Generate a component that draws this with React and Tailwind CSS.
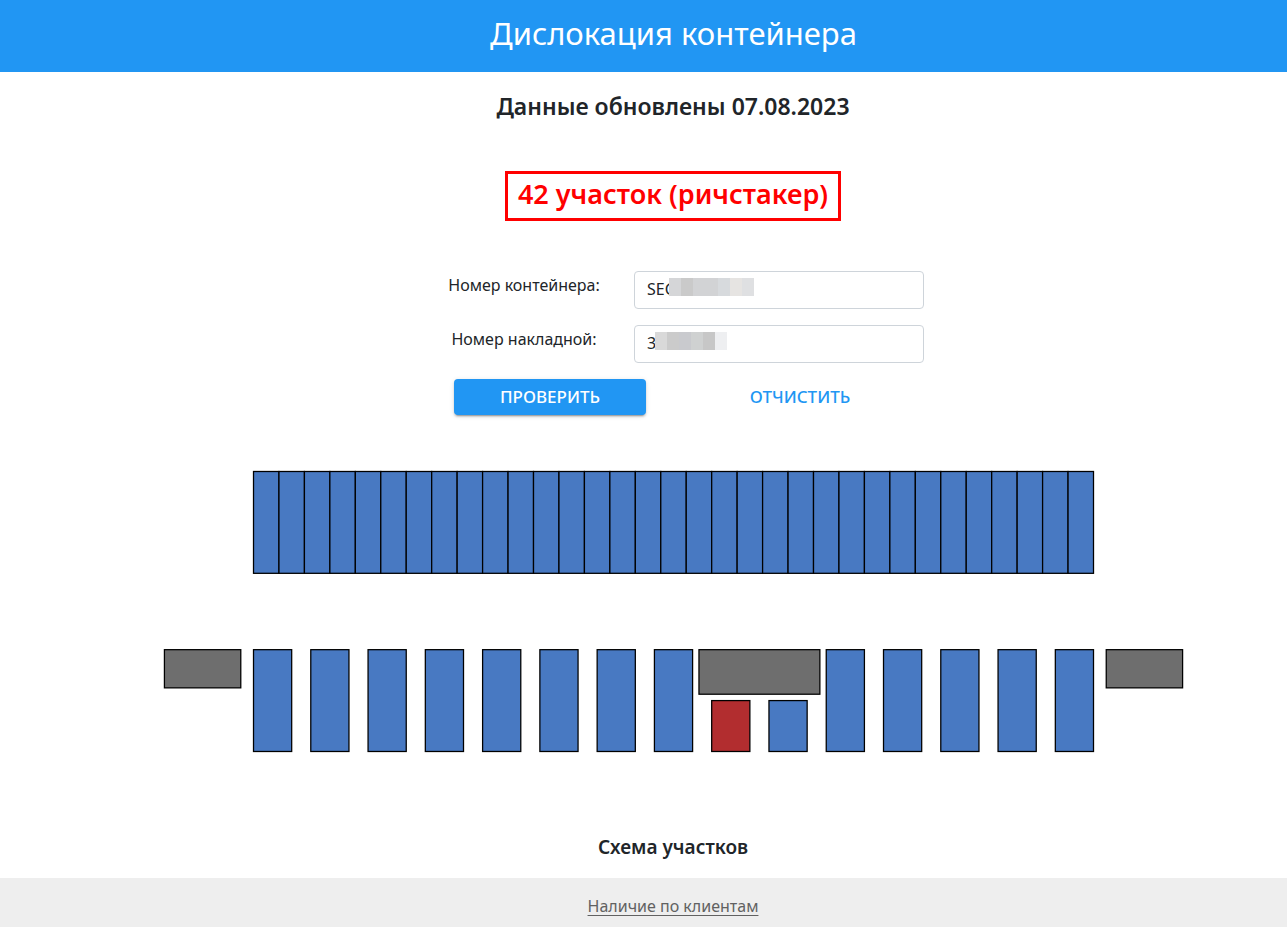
import { useState } from "react";

const BLUE = "#4879c2";
const GRAY = "#6e6e6e";
const RED = "#b22d2f";

const topRow = Array.from({ length: 33 }, (_, i) => ({ x: i * 20, y: 0, w: 20, h: 80, fill: BLUE }));

const bottomRow = Array.from({ length: 15 }, (_, i) => {
  const short = i === 8 || i === 9;
  return { x: i * 45, y: short ? 180 : 140, w: 30, h: short ? 40 : 80, fill: i === 8 ? RED : BLUE };
});

const buildings = [
  { x: -70, y: 140, w: 60, h: 30, fill: GRAY },
  { x: 350, y: 140, w: 95, h: 35, fill: GRAY },
  { x: 670, y: 140, w: 60, h: 30, fill: GRAY },
];

function YardMap() {
  return (
    <svg viewBox="-110.4 -21.6 880 275" className="block w-full max-w-[1120px]" role="img" aria-label="Схема участков">
      {[...topRow, ...bottomRow, ...buildings].map((r) => (
        <rect key={`${r.x}:${r.y}:${r.w}`} x={r.x} y={r.y} width={r.w} height={r.h} fill={r.fill} stroke="#000" strokeWidth="1" />
      ))}
    </svg>
  );
}

function Mask({ className, children }) {
  return (
    <span aria-hidden="true" className={`absolute flex h-[18px] ${className}`}>
      {children}
    </span>
  );
}

function Field({ id, label, value, onChange, children }) {
  return (
    <div className="flex items-start gap-5">
      <label htmlFor={id} className="w-[180px] shrink-0 pt-0.5 text-center text-base leading-6">
        {label}
      </label>
      <div className="relative min-w-0 flex-1">
        <input
          id={id}
          value={value}
          onChange={(e) => onChange(e.target.value)}
          className="block h-[38px] w-full rounded border border-[#ced4da] bg-white px-3 pb-0.5 text-base leading-6 outline-none focus:border-[#2196f3]"
        />
        {value && children}
      </div>
    </div>
  );
}

export default function App() {
  const [container, setContainer] = useState("SEG");
  const [waybill, setWaybill] = useState("3");

  return (
    <div className="flex min-h-screen flex-col bg-white font-['Noto_Sans',sans-serif] text-[#212529]">
      <header className="flex h-[72px] items-center justify-center bg-[#2196f3] pb-1.5 pl-[60px]">
        <h1 className="text-[31px] leading-10 text-white">Дислокация контейнера</h1>
      </header>

      <main className="flex flex-col items-center pl-[59px]">
        <h2 className="mt-5 text-[23px] leading-7 font-semibold">Данные обновлены 07.08.2023</h2>
        <p className="mt-[51px] border-3 border-[#ff0000] px-2.5 pt-0.5 pb-1.5 text-[27px] leading-9 font-semibold text-[#ff0000]">
          42 участок (ричстакер)
        </p>

        <form className="mt-[50px] w-full max-w-[502px] pl-3" onSubmit={(e) => e.preventDefault()}>
          <div className="flex flex-col gap-4">
            <Field id="container" label="Номер контейнера:" value={container} onChange={setContainer}>
              <Mask className="top-[7px] left-[35px]">
                <span className="w-3 bg-[#d5d6d8]" />
                <span className="w-3 bg-[#cacaca]" />
                <span className="w-[25px] bg-[#d2d3d5]" />
                <span className="w-3 bg-[#d7dadd]" />
                <span className="w-3 bg-[#e6e4e2]" />
                <span className="w-3 bg-[#dfe0e2]" />
              </Mask>
            </Field>
            <Field id="waybill" label="Номер накладной:" value={waybill} onChange={setWaybill}>
              <Mask className="top-[7px] left-[21px]">
                <span className="w-3 bg-[#d9d9d9]" />
                <span className="w-3 bg-[#cbcbcb]" />
                <span className="w-3 bg-[#c9cace]" />
                <span className="w-3 bg-[#cfd1d1]" />
                <span className="w-3 bg-[#c7c7c7]" />
                <span className="w-3 bg-[#eeeff1]" />
              </Mask>
            </Field>
          </div>
          <div className="mt-4 flex gap-[58px] pl-5">
            <button
              type="submit"
              className="h-9 w-48 rounded bg-[#2196f3] text-[17px] font-medium text-white shadow-[0_3px_1px_-2px_rgba(0,0,0,0.2),0_2px_2px_0_rgba(0,0,0,0.14),0_1px_5px_0_rgba(0,0,0,0.12)]"
            >
              ПРОВЕРИТЬ
            </button>
            <button
              type="button"
              className="h-9 w-48 rounded text-[17px] font-medium text-[#2196f3]"
              onClick={() => {
                setContainer("");
                setWaybill("");
              }}
            >
              ОТЧИСТИТЬ
            </button>
          </div>
        </form>

        <div className="mt-[29px] flex w-full justify-center">
          <YardMap />
        </div>
        <h3 className="mt-[41px] mb-[17px] text-[19px] leading-6 font-semibold">Схема участков</h3>
      </main>

      <footer className="mt-auto flex justify-center bg-[#eeeeee] pt-4 pb-[9px] pl-[59px]">
        <a href="#clients" className="text-base leading-6 text-[#616161] underline underline-offset-3">
          Наличие по клиентам
        </a>
      </footer>
    </div>
  );
}
